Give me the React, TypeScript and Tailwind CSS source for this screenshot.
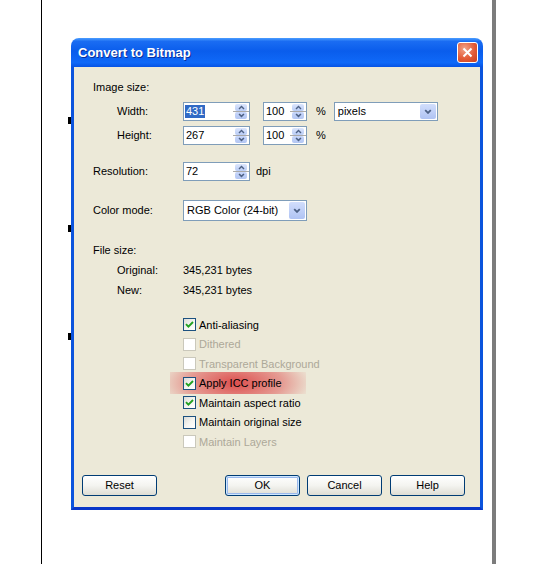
import React from 'react';

const font = "font-['Liberation_Sans',Arial,sans-serif]";

function ChevronUp() {
  return (
    <svg width="7" height="5" viewBox="0 0 7 5">
      <path d="M1 4 L3.5 1.5 L6 4" fill="none" stroke="#4D6185" strokeWidth="1.4" />
    </svg>
  );
}

function ChevronDown({ size = 7 }: { size?: number }) {
  return (
    <svg width={size} height={size * 0.7} viewBox="0 0 7 5">
      <path d="M1 1 L3.5 3.5 L6 1" fill="none" stroke="#4D6185" strokeWidth="1.6" />
    </svg>
  );
}

interface SpinProps {
  value: string;
  className: string;
  selected?: boolean;
}

const SpinInput: React.FC<SpinProps> = ({ value, className, selected }) => (
  <div className={`flex h-[19px] items-stretch border border-[#7F9DB9] bg-white ${className}`}>
    <div className="flex flex-1 items-center pl-[1px] text-[11px] leading-none">
      {selected ? (
        <span className="bg-[#316AC5] px-[1px] py-[1px] text-white">{value}</span>
      ) : (
        <span className="px-[1px]">{value}</span>
      )}
    </div>
    <div className="relative flex w-[16px] flex-col items-center justify-between py-[1px]">
      <div className="flex h-[7px] w-[12px] items-center justify-center rounded-[2px] bg-gradient-to-b from-[#DCE6FD] to-[#B9CCF5]">
        <ChevronUp />
      </div>
      <div className="absolute left-0 right-0 top-[8px] h-[1px] bg-[#A9A9A9]" />
      <div className="flex h-[7px] w-[12px] items-center justify-center rounded-[2px] bg-gradient-to-b from-[#C8D7FA] to-[#B3C6F3]">
        <ChevronDown />
      </div>
    </div>
  </div>
);

interface SelectProps {
  value: string;
  className: string;
}

const Select: React.FC<SelectProps> = ({ value, className }) => (
  <div className={`flex items-stretch border border-[#7F9DB9] bg-white p-[1px] ${className}`}>
    <div className="flex flex-1 items-center pl-[2px] text-[11px]">{value}</div>
    <div className="flex w-[16px] items-center justify-center rounded-[2px] bg-gradient-to-b from-[#D2DEFC] to-[#AFC3F3]">
      <ChevronDown size={8} />
    </div>
  </div>
);

interface CheckProps {
  label: string;
  checked?: boolean;
  disabled?: boolean;
  highlight?: boolean;
}

const Check: React.FC<CheckProps> = ({ label, checked, disabled, highlight }) => (
  <div className="relative flex h-[19.5px] items-center pl-[109px]">
    {highlight && (
      <div className="absolute left-[96px] top-[-2px] h-[22px] w-[136px] bg-[radial-gradient(ellipse_58%_150%_at_48%_50%,rgba(220,70,70,0.95),rgba(222,80,80,0.5)_60%,rgba(222,80,80,0)_100%)]" />
    )}
    <div
      className={`relative flex h-[13px] w-[13px] items-center justify-center border ${
        disabled
          ? 'border-[#CAC8BB] bg-white'
          : 'border-[#1C5180] bg-gradient-to-br from-[#DCDCD7] via-[#F4F4F0] to-white'
      }`}
    >
      {checked && (
        <svg width="9" height="9" viewBox="0 0 9 9">
          <path d="M1 4.2 L3.4 6.6 L8 2" fill="none" stroke="#21A121" strokeWidth="1.9" />
        </svg>
      )}
    </div>
    <span className={`relative ml-[3px] text-[11px] ${disabled ? 'text-[#ACA899]' : 'text-black'}`}>
      {label}
    </span>
  </div>
);

interface BtnProps {
  label: string;
  isDefault?: boolean;
  className?: string;
}

const XpButton: React.FC<BtnProps> = ({ label, isDefault, className = '' }) => (
  <div
    className={`flex h-[21px] w-[75px] items-center justify-center rounded-[3px] border border-[#003C74] bg-gradient-to-b from-white via-[#F4F4F0] to-[#DEDDD4] text-[11px] ${
      isDefault ? 'shadow-[inset_0_0_0_1px_#CEE7FF,inset_0_0_0_2px_#9AB8EC]' : ''
    } ${className}`}
  >
    {label}
  </div>
);

export default function App() {
  return (
    <div className={`relative h-[564px] w-[534px] overflow-hidden bg-white text-black ${font}`}>
      <div className="h-full pl-[41px]">
        <div className="relative h-full w-[455px] border-l border-r-[4px] border-l-black border-r-[#7C7C7C]">
          {/* selection handles behind the dialog */}
          <div className="absolute left-[26px] top-[117px] h-[7px] w-[4px] bg-black" />
          <div className="absolute left-[26px] top-[225px] h-[7px] w-[4px] bg-black" />
          <div className="absolute left-[26px] top-[333px] h-[7px] w-[4px] bg-black" />

          <div className="relative ml-[29px] pt-[38px]">
            <div className="w-[412px]">
              {/* title bar */}
              <div className="flex h-[29px] items-center justify-between rounded-t-[8px] bg-[linear-gradient(to_bottom,#4A9DFF_0%,#1A6CF2_12%,#0A5DEC_45%,#0F69F8_85%,#0653E4_100%)] pl-[7px] pr-[5px]">
                <span className="text-[13px] font-bold text-white [text-shadow:1px_1px_0_#0A2F9A]">
                  Convert to Bitmap
                </span>
                <div className="flex h-[21px] w-[21px] items-center justify-center rounded-[3px] border border-white bg-[radial-gradient(circle_at_35%_30%,#F2A48A,#E35B37_55%,#C7401E)]">
                  <svg width="11" height="11" viewBox="0 0 11 11">
                    <path d="M1.5 1.5 L9.5 9.5 M9.5 1.5 L1.5 9.5" stroke="white" strokeWidth="2" />
                  </svg>
                </div>
              </div>

              {/* body */}
              <div className="flex h-[443px] flex-col border-x-[3px] border-b-[3px] border-x-[#0B54DD] border-b-[#0836C8] bg-[#ECE9D8] pt-[13px] text-[11px]">
                <div className="flex h-[14px] items-center pl-[19px]">Image size:</div>

                <div className="mt-[8px] flex h-[19px] items-center">
                  <div className="w-[109px] pl-[43px]">Width:</div>
                  <SpinInput value="431" selected className="w-[67px]" />
                  <SpinInput value="100" className="ml-[13px] w-[44px]" />
                  <span className="ml-[9px]">%</span>
                  <Select value="pixels" className="ml-[8px] h-[19px] w-[104px]" />
                </div>

                <div className="mt-[5px] flex h-[19px] items-center">
                  <div className="w-[109px] pl-[43px]">Height:</div>
                  <SpinInput value="267" className="w-[67px]" />
                  <SpinInput value="100" className="ml-[13px] w-[44px]" />
                  <span className="ml-[9px]">%</span>
                </div>

                <div className="mt-[17px] flex h-[19px] items-center">
                  <div className="w-[109px] pl-[19px]">Resolution:</div>
                  <SpinInput value="72" className="w-[67px]" />
                  <span className="ml-[6px]">dpi</span>
                </div>

                <div className="mt-[19px] flex h-[21px] items-center">
                  <div className="w-[109px] pl-[19px]">Color mode:</div>
                  <Select value="RGB Color (24-bit)" className="h-[21px] w-[124px]" />
                </div>

                <div className="mt-[22px] flex h-[14px] items-center pl-[19px]">File size:</div>

                <div className="mt-[6px] flex h-[14px] items-center">
                  <div className="w-[109px] pl-[43px]">Original:</div>
                  <span>345,231 bytes</span>
                </div>
                <div className="mt-[6px] flex h-[14px] items-center">
                  <div className="w-[109px] pl-[43px]">New:</div>
                  <span>345,231 bytes</span>
                </div>

                <div className="mt-[18px] flex flex-col">
                  <Check label="Anti-aliasing" checked />
                  <Check label="Dithered" disabled />
                  <Check label="Transparent Background" disabled />
                  <Check label="Apply ICC profile" checked highlight />
                  <Check label="Maintain aspect ratio" checked />
                  <Check label="Maintain original size" />
                  <Check label="Maintain Layers" disabled />
                </div>

                <div className="mt-[23px] flex items-center pl-[8px]">
                  <XpButton label="Reset" />
                  <XpButton label="OK" isDefault className="ml-[68px]" />
                  <XpButton label="Cancel" className="ml-[7px]" />
                  <XpButton label="Help" className="ml-[8px]" />
                </div>
              </div>
            </div>
          </div>
        </div>
      </div>
    </div>
  );
}
